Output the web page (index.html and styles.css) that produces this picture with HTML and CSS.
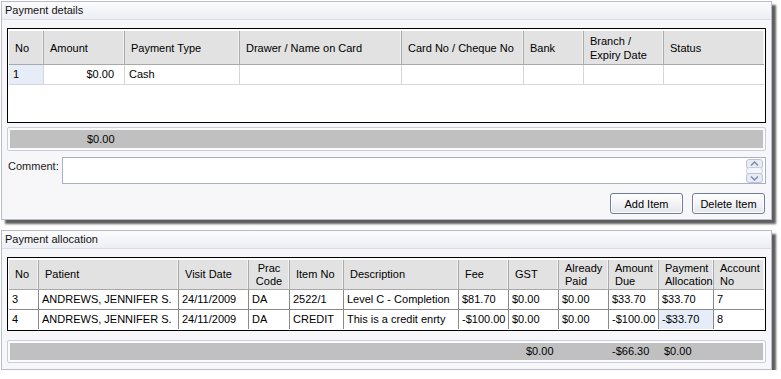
FILE: index.html
```html
<!DOCTYPE html>
<html>
<head>
<meta charset="utf-8">
<link rel="stylesheet" href="styles.css">
</head>
<body>
<div class="panel panel-details">
  <div class="title">Payment details</div>
  <div class="body">
    <div class="grid grid-details">
      <table>
        <colgroup>
          <col class="d1"><col class="d2"><col class="d3"><col class="d4"><col class="d5"><col class="d6"><col class="d7"><col class="d8">
        </colgroup>
        <thead>
          <tr><th>No</th><th>Amount</th><th>Payment Type</th><th>Drawer / Name on Card</th><th>Card No / Cheque No</th><th>Bank</th><th>Branch /<br>Expiry Date</th><th class="last">Status</th></tr>
        </thead>
        <tbody>
          <tr><td class="sel">1</td><td class="num">$0.00</td><td>Cash</td><td></td><td></td><td></td><td></td><td class="last"></td></tr>
        </tbody>
      </table>
    </div>
    <div class="totals totals-details"><div class="totals-in"><span class="t-amount">$0.00</span></div></div>
    <div class="comment-row">
      <span class="comment-label">Comment:</span>
      <div class="textbox">
        <svg class="spin" width="18" height="24" viewBox="0 0 18 24">
          <rect x="0.5" y="0.5" width="16" height="9" rx="2.5" fill="#e6ebf4" stroke="#b9c3d6"/>
          <rect x="0.5" y="8.5" width="16" height="7" rx="3" fill="#f3f5fa" stroke="#c7cfdf"/>
          <rect x="0.5" y="14.5" width="16" height="9" rx="2.5" fill="#e6ebf4" stroke="#b9c3d6"/>
          <path d="M5 6.5 L8.5 3 L12 6.5" fill="none" stroke="#7d8cab" stroke-width="1.5"/>
          <path d="M5 17.5 L8.5 21 L12 17.5" fill="none" stroke="#7d8cab" stroke-width="1.5"/>
        </svg>
      </div>
    </div>
    <div class="buttons">
      <button class="btn btn-add">Add Item</button>
      <button class="btn btn-del">Delete Item</button>
    </div>
  </div>
</div>

<div class="panel panel-alloc">
  <div class="title">Payment allocation</div>
  <div class="body">
    <div class="grid grid-alloc">
      <table>
        <colgroup>
          <col class="a1"><col class="a2"><col class="a3"><col class="a4"><col class="a5"><col class="a6"><col class="a7"><col class="a8"><col class="a9"><col class="a10"><col class="a11"><col class="a12">
        </colgroup>
        <thead>
          <tr><th>No</th><th>Patient</th><th>Visit Date</th><th class="center">Prac<br>Code</th><th>Item No</th><th>Description</th><th>Fee</th><th>GST</th><th>Already<br>Paid</th><th>Amount<br>Due</th><th>Payment<br>Allocation</th><th class="last">Account<br>No</th></tr>
        </thead>
        <tbody>
          <tr><td>3</td><td>ANDREWS, JENNIFER S.</td><td>24/11/2009</td><td>DA</td><td>2522/1</td><td>Level C - Completion</td><td>$81.70</td><td>$0.00</td><td>$0.00</td><td>$33.70</td><td>$33.70</td><td class="last">7</td></tr>
          <tr><td>4</td><td>ANDREWS, JENNIFER S.</td><td>24/11/2009</td><td>DA</td><td>CREDIT</td><td>This is a credit enrty</td><td>-$100.00</td><td>$0.00</td><td>$0.00</td><td>-$100.00</td><td class="sel">-$33.70</td><td class="last">8</td></tr>
        </tbody>
      </table>
    </div>
    <div class="totals totals-alloc"><div class="totals-in"><span class="t-gst">$0.00</span><span class="t-due">-$66.30</span><span class="t-pay">$0.00</span></div></div>
  </div>
</div>
</body>
</html>
```

FILE: styles.css
```css
html, body {
  margin: 0;
  padding: 0;
  background: #ffffff;
}
body {
  font-family: Tahoma, "Liberation Sans", Arial, sans-serif;
  font-size: 11px;
  color: #000;
  padding: 1px 0 0 1px;
}

.panel {
  width: 771px;
  box-sizing: border-box;
  border: 1px solid #b8bccb;
  background: #f7f7fa;
  box-shadow: 4px 4px 2px rgba(40, 40, 40, 0.75);
}
.panel-alloc {
  margin-top: 10px;
}

.title {
  height: 17px;
  line-height: 17px;
  padding-left: 3px;
  background: linear-gradient(#fcfcfe, #eceef4);
  border-bottom: 1px solid #dadde6;
  color: #111;
}

.body {
  padding: 8px 5px 5px 5px;
}
.panel-alloc .body {
  padding-bottom: 6px;
}

.grid {
  border: 1px solid #000;
  padding: 2px 1px 1px 1px;
  background: #fff;
}
.grid-details {
  height: 90px;
}
.grid table {
  width: 755px;
  table-layout: fixed;
  border-collapse: separate;
  border-spacing: 0;
}
.grid th, .grid td {
  padding: 0;
  text-align: left;
  white-space: nowrap;
  overflow: hidden;
}
.grid th {
  background: #e2e2e2;
  font-weight: normal;
  border-right: 1px solid #a9a9a9;
  border-bottom: 1px solid #a9a9a9;
  box-shadow: inset -1px 0 0 #f2f2f2;
  vertical-align: middle;
}
.grid th.last, .grid td.last {
  border-right: none;
}

.d1 { width: 35px; }
.d2 { width: 81px; }
.d3 { width: 115px; }
.d4 { width: 162px; }
.d5 { width: 122px; }
.d6 { width: 60px; }
.d7 { width: 80px; }
.d8 { width: 100px; }

.grid-details th {
  height: 33px;
  line-height: 14px;
  padding-left: 6px;
}
.grid-details td {
  height: 19px;
  line-height: 19px;
  border-right: 1px solid #d6d6d6;
  border-bottom: 1px solid #d6d6d6;
  padding-left: 4px;
}
.grid-details td.num {
  text-align: right;
  padding-right: 10px;
}
.grid-details td.sel {
  background: #e6edf9;
}

.a1 { width: 30px; }
.a2 { width: 140px; }
.a3 { width: 70px; }
.a4 { width: 41px; }
.a5 { width: 54px; }
.a6 { width: 115px; }
.a7 { width: 50px; }
.a8 { width: 50px; }
.a9 { width: 50px; }
.a10 { width: 50px; }
.a11 { width: 55px; }
.a12 { width: 50px; }

.grid-alloc th {
  height: 29px;
  line-height: 13px;
  padding-left: 6px;
}
.grid-alloc th.center {
  text-align: center;
  padding-left: 0;
}
.grid-alloc td {
  height: 19px;
  line-height: 19px;
  border-right: 1px solid #8a8a8a;
  border-bottom: 1px solid #8a8a8a;
  padding-left: 3px;
}
.grid-alloc tbody tr:last-child td {
  border-bottom: none;
}
.grid-alloc td.sel {
  background: #e6edf9;
}

.totals {
  margin-top: 4px;
  border: 1px solid #c9cddd;
  border-radius: 2px;
  padding: 2px;
  background: #fbfbfd;
}
.totals-in {
  height: 18px;
  line-height: 18px;
  background: #c1c0c1;
  display: flex;
}
.totals-details .totals-in {
  padding-left: 77px;
}
.totals-alloc {
  margin-top: 9px;
}
.totals-alloc .totals-in {
  height: 17px;
  line-height: 17px;
  padding-left: 516px;
}
.t-gst { width: 86px; }
.t-due { width: 52px; }

.comment-row {
  margin-top: 6px;
  display: flex;
  align-items: flex-start;
}
.comment-label {
  width: 54px;
  padding-left: 1px;
  line-height: 14px;
  padding-top: 2px;
  color: #222;
}
.textbox {
  flex: 1;
  height: 25px;
  border: 1px solid #a8afc6;
  background: #fff;
  display: flex;
  justify-content: flex-end;
  align-items: center;
  padding-right: 1px;
}
.spin {
  display: block;
}

.buttons {
  margin-top: 9px;
  display: flex;
  justify-content: flex-end;
  gap: 9px;
  padding-right: 1px;
}
.btn {
  font-family: Tahoma, "Liberation Sans", Arial, sans-serif;
  font-size: 11px;
  color: #000;
  height: 21px;
  padding: 0;
  border: 1px solid #6f7e9c;
  border-radius: 3px;
  background: linear-gradient(#ffffff, #f1f1f4 60%, #e4e5ea);
  box-shadow: inset 0 0 0 1px #ffffff;
}
.btn-add { width: 73px; }
.btn-del { width: 73px; }
```
